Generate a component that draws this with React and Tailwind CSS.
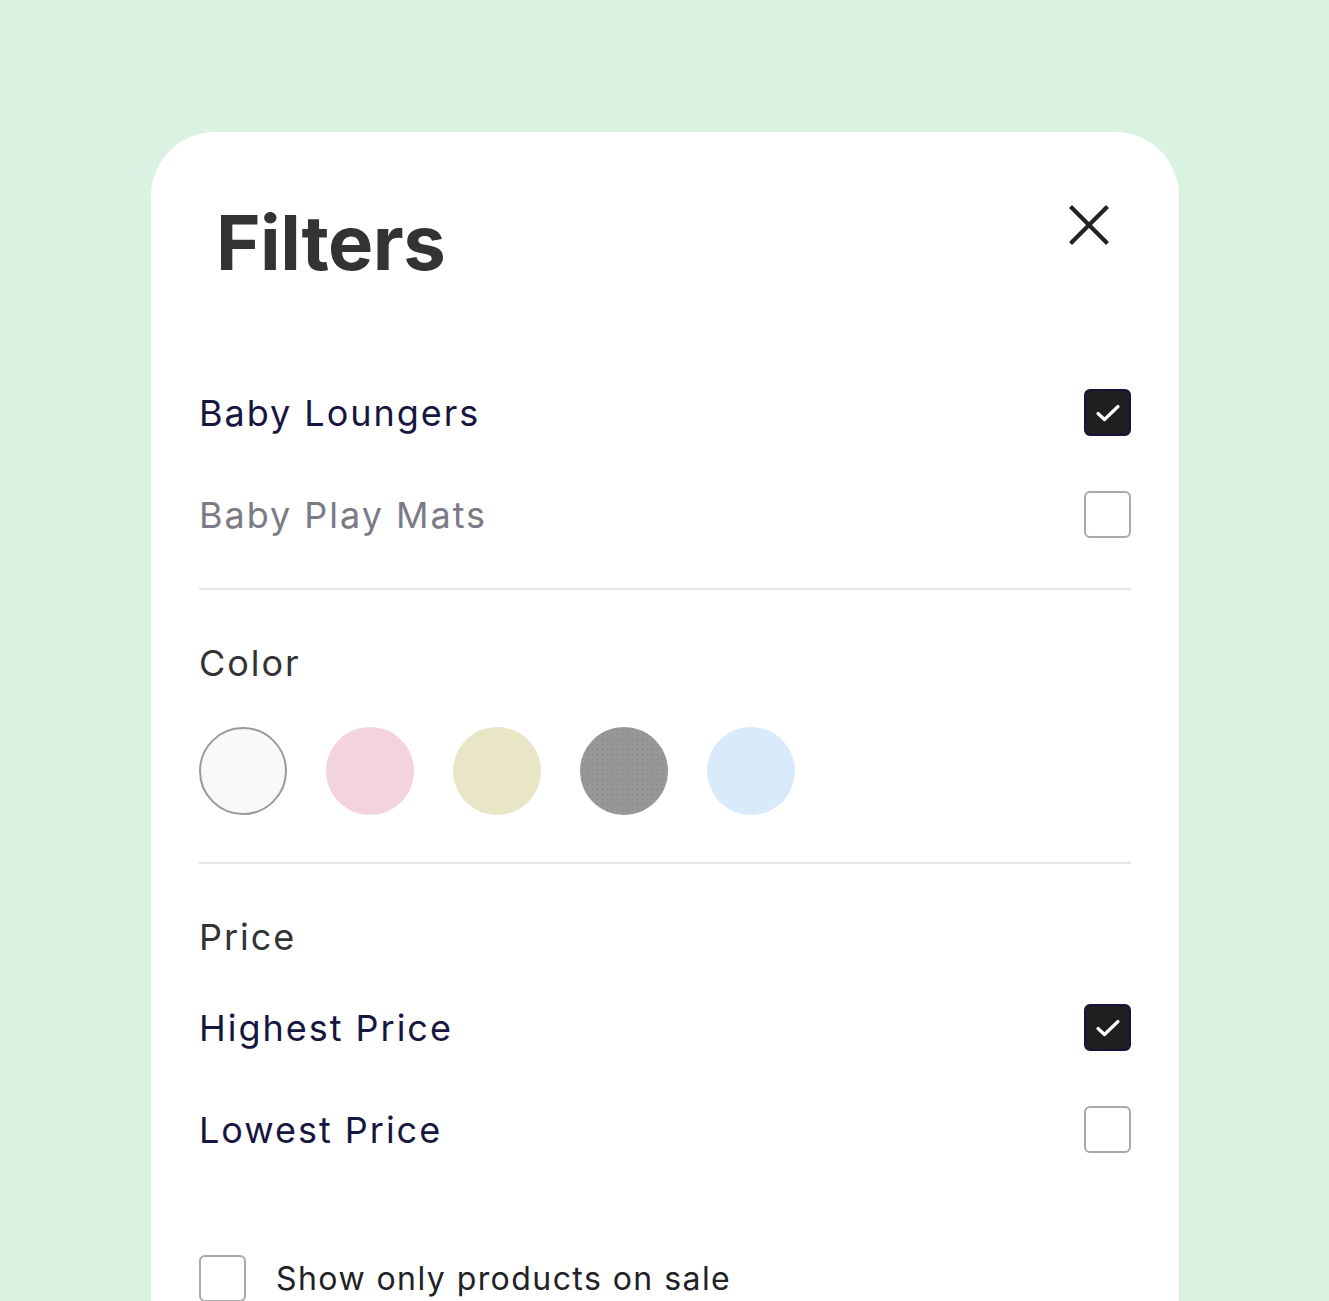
import React from 'react';

const font = { fontFamily: 'Inter, "Open Sans", sans-serif', letterSpacing: '0.055em' };

function Box({ checked }) {
  if (checked) {
    return (
      <div className="w-[47px] h-[47px] rounded-[6px] bg-[#1f1f22] border-2 border-[#15153a] flex items-center justify-center shrink-0">
        <svg width="26" height="20" viewBox="0 0 26 20" fill="none">
          <path d="M3 10.5 L9.5 16.5 L23 3.5" stroke="#fff" strokeWidth="3.2" strokeLinecap="round" strokeLinejoin="round" />
        </svg>
      </div>
    );
  }
  return <div className="w-[47px] h-[47px] rounded-[6px] border-2 border-[#a9a9a9] bg-white shrink-0" />;
}

function Row({ label, checked, muted, className = '' }) {
  return (
    <div className={`flex items-center justify-between h-[47px] ${className}`}>
      <span className={`text-[36px] leading-none ${muted ? 'text-[#7b7a86]' : 'text-[#16163f]'}`} style={font}>
        {label}
      </span>
      <Box checked={checked} />
    </div>
  );
}

export default function App() {
  const colors = [
    'bg-[#faf9f8] border-2 border-[#9a9a9a]',
    'bg-[#f3d3dc]',
    'bg-[#e9e6c8]',
    'bg-[#979797] bg-[radial-gradient(#7a7a7a_0.7px,transparent_1px)] bg-[length:5px_5px]',
    'bg-[#d9eafb]',
  ];
  return (
    <div className="w-[1329px] h-[1301px] bg-[#d9f2e2] overflow-hidden pt-[132px] pl-[151px]">
      <div className="w-[1028px] h-[1250px] bg-white rounded-t-[64px] px-[48px]">
        <div className="flex justify-between pt-[72px]">
          <h1 className="ml-[17px] text-[76px] font-bold leading-none text-[#333336] tracking-[-0.5px]" style={{ fontFamily: 'Inter, sans-serif' }}>
            Filters
          </h1>
          <svg className="mr-[22px] mt-[1px]" width="40" height="40" viewBox="0 0 40 40">
            <path d="M3 3 L37 37 M37 3 L3 37" stroke="#222" strokeWidth="4.2" strokeLinecap="square" />
          </svg>
        </div>

        <Row label="Baby Loungers" checked className="mt-[109px]" />
        <Row label="Baby Play Mats" muted className="mt-[55px]" />

        <div className="h-[2px] bg-[#e6e6e6] mt-[50px]" />

        <div className="mt-[55px] text-[36px] leading-none text-[#333336]" style={font}>Color</div>
        <div className="flex gap-[39px] mt-[46px]">
          {colors.map((c, i) => (
            <div key={i} className={`w-[88px] h-[88px] rounded-full ${c}`} />
          ))}
        </div>

        <div className="h-[2px] bg-[#e6e6e6] mt-[47px]" />

        <div className="mt-[55px] text-[36px] leading-none text-[#333336]" style={font}>Price</div>
        <Row label="Highest Price" checked className="mt-[49px]" />
        <Row label="Lowest Price" className="mt-[55px]" />

        <div className="flex items-center gap-[30px] mt-[102px]">
          <div className="w-[47px] h-[47px] rounded-[6px] border-2 border-[#a9a9a9] shrink-0" />
          <span className="text-[32px] leading-none text-[#222226]" style={{ ...font, letterSpacing: '0.045em' }}>
            Show only products on sale
          </span>
        </div>
      </div>
    </div>
  );
}
